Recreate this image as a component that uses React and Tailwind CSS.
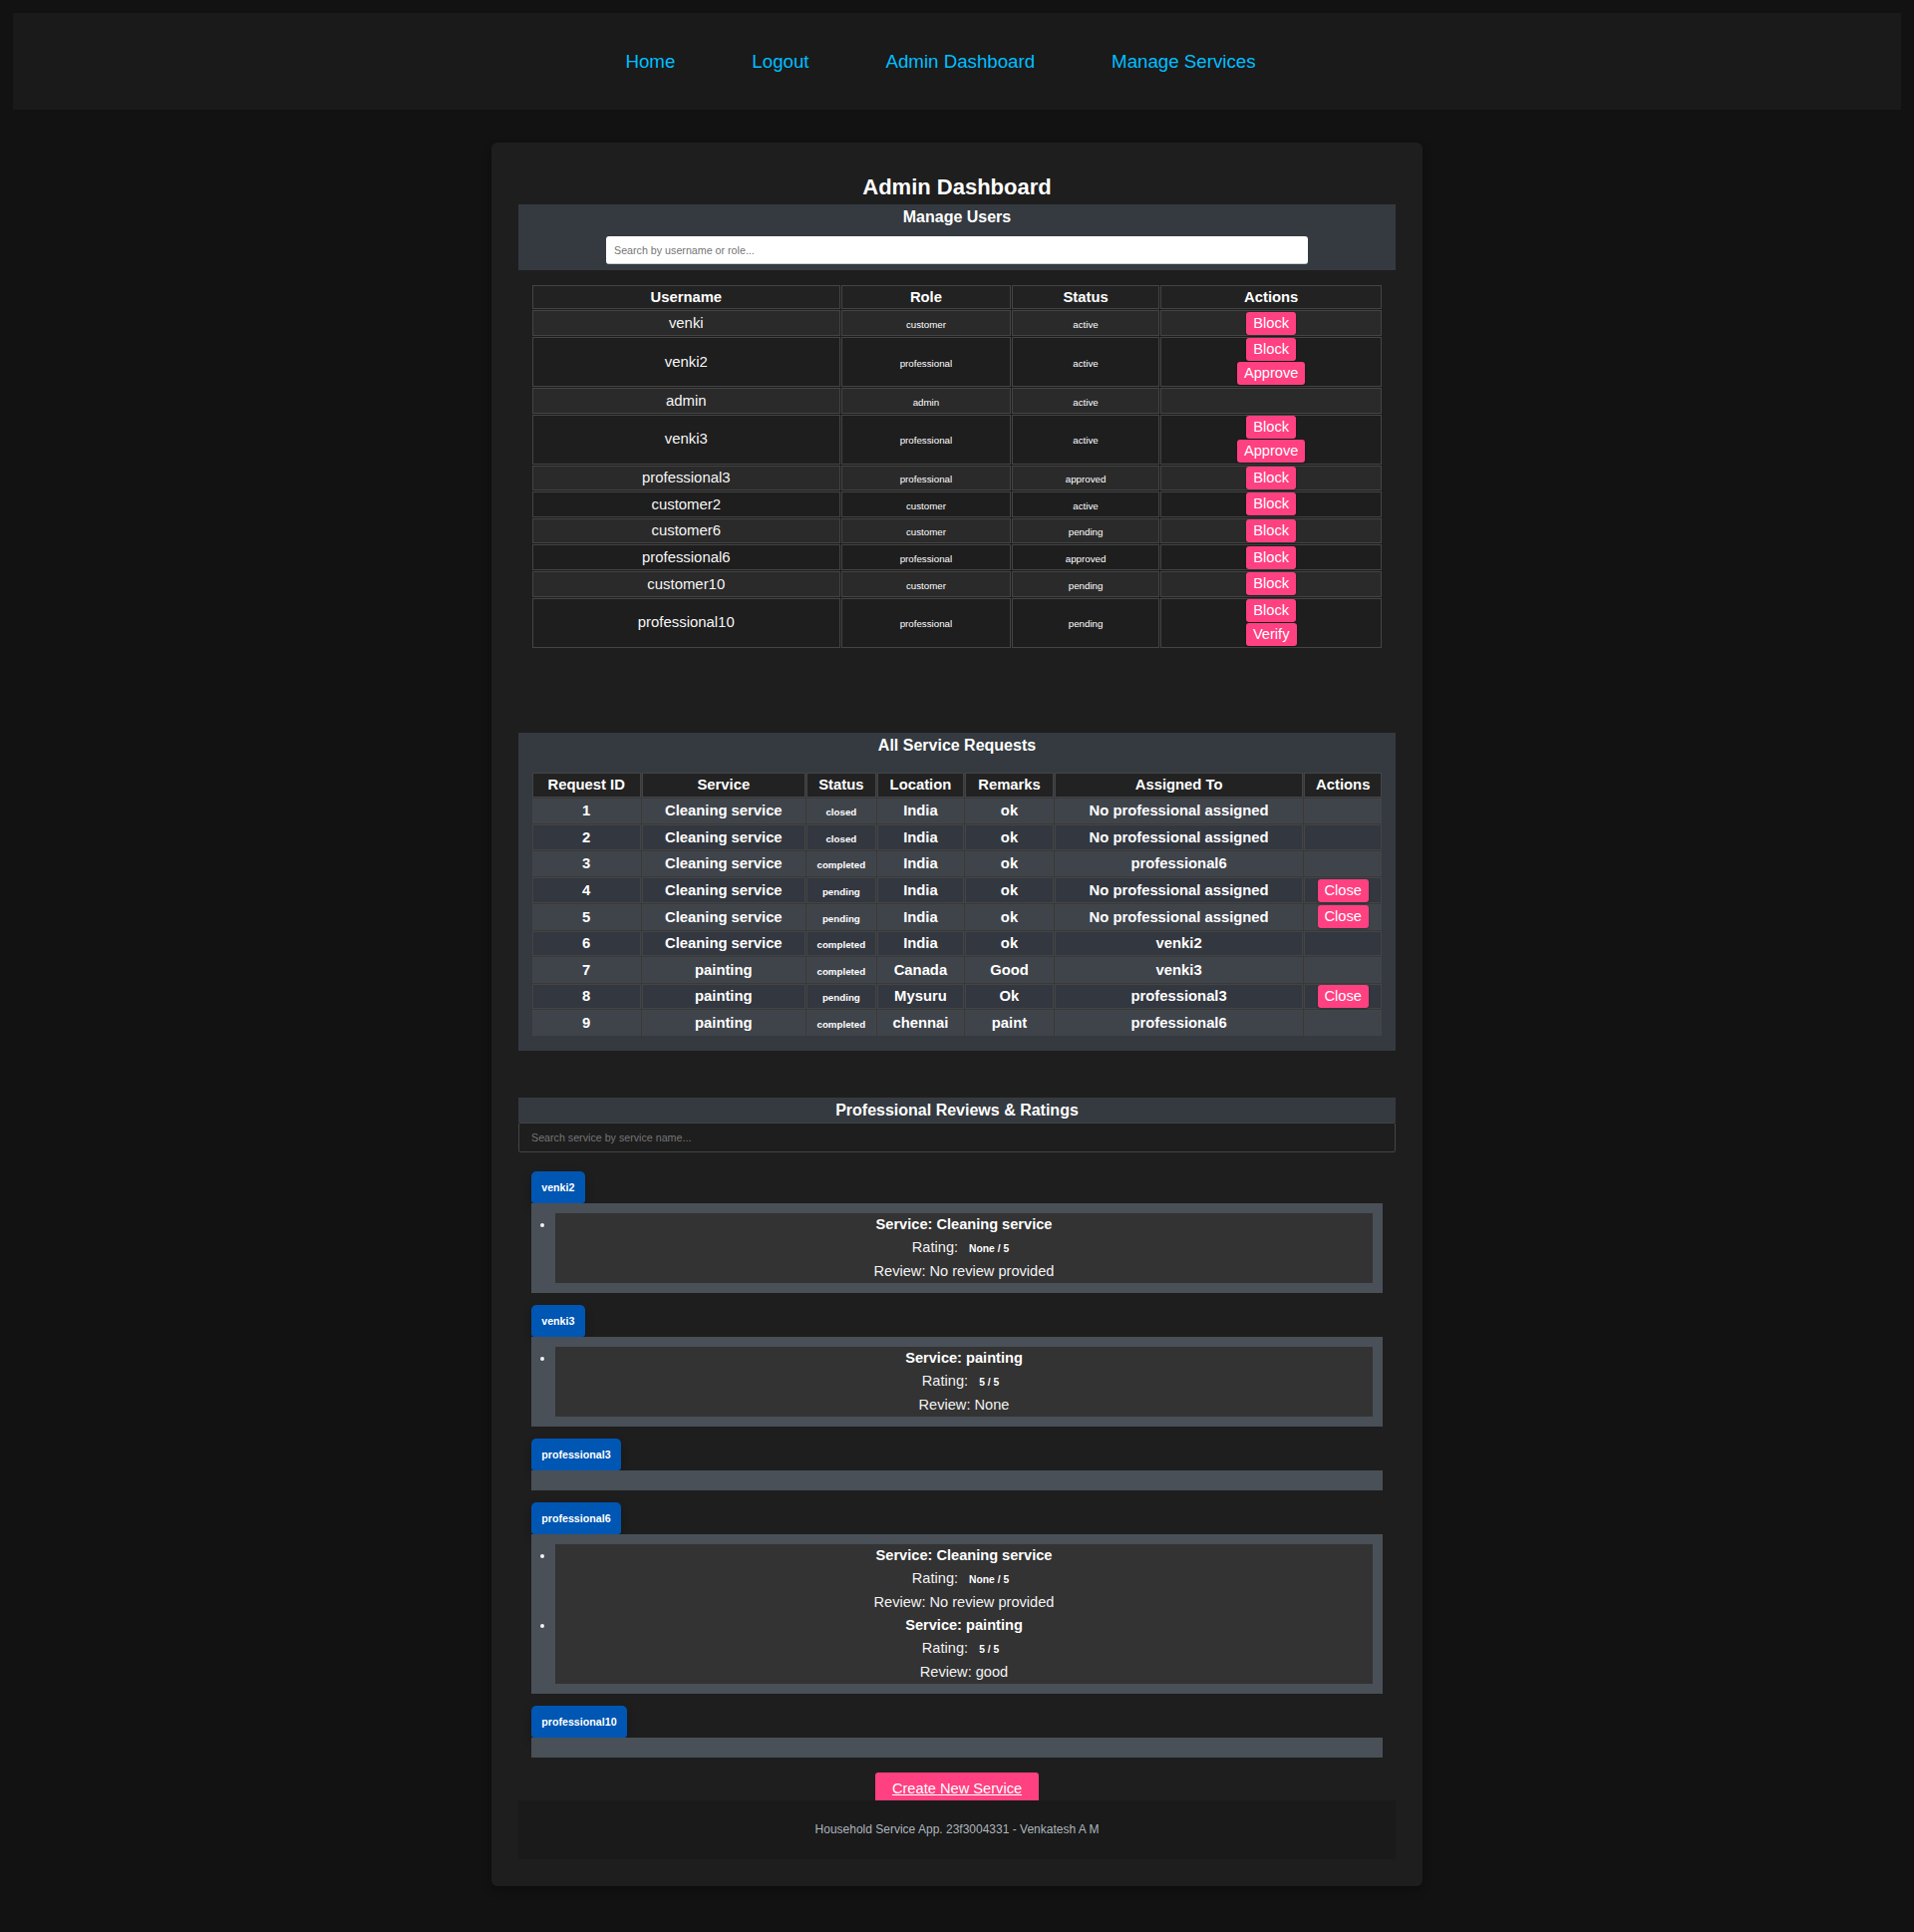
const users = [
  ["venki", "customer", "active", ["Block"]],
  ["venki2", "professional", "active", ["Block", "Approve"]],
  ["admin", "admin", "active", []],
  ["venki3", "professional", "active", ["Block", "Approve"]],
  ["professional3", "professional", "approved", ["Block"]],
  ["customer2", "customer", "active", ["Block"]],
  ["customer6", "customer", "pending", ["Block"]],
  ["professional6", "professional", "approved", ["Block"]],
  ["customer10", "customer", "pending", ["Block"]],
  ["professional10", "professional", "pending", ["Block", "Verify"]],
];

const requests = [
  [1, "Cleaning service", "closed", "India", "ok", "No professional assigned", false],
  [2, "Cleaning service", "closed", "India", "ok", "No professional assigned", false],
  [3, "Cleaning service", "completed", "India", "ok", "professional6", false],
  [4, "Cleaning service", "pending", "India", "ok", "No professional assigned", true],
  [5, "Cleaning service", "pending", "India", "ok", "No professional assigned", true],
  [6, "Cleaning service", "completed", "India", "ok", "venki2", false],
  [7, "painting", "completed", "Canada", "Good", "venki3", false],
  [8, "painting", "pending", "Mysuru", "Ok", "professional3", true],
  [9, "painting", "completed", "chennai", "paint", "professional6", false],
];

const reviews = [
  ["venki2", [["Cleaning service", "None", "No review provided"]]],
  ["venki3", [["painting", "5", "None"]]],
  ["professional3", []],
  ["professional6", [["Cleaning service", "None", "No review provided"], ["painting", "5", "good"]]],
  ["professional10", []],
];

function PinkButton({ children }) {
  return (
    <button className="block mx-auto h-[23px] px-[7px] rounded-[3px] bg-[#ff4081] text-white text-[14.65px] leading-[23px] shadow-[0_1px_2px_rgba(0,0,0,0.3)]">
      {children}
    </button>
  );
}

function Review({ service, rating, review }) {
  return (
    <li className="h-[70px] text-[14.6px] leading-[23px] text-center text-[#f2f2f2] list-disc">
      <p className="font-bold text-white">Service: {service}</p>
      <p>
        Rating: <span className="mx-[7px] text-[10.3px] font-bold text-white">{rating} / 5</span>
      </p>
      <p>Review: {review}</p>
    </li>
  );
}

export default function App() {
  return (
    <div className="min-h-[1938px] bg-[#121212] pt-[13px] font-['Liberation_Sans',Arial,sans-serif] text-white">
      <nav className="mx-[13px] h-[97px] bg-[#1a1a1a] flex items-center justify-center pr-[33px] pt-[2px]">
        <ul className="flex gap-[77px] text-[18.7px] text-[#00bfff]">
          <li>Home</li>
          <li>Logout</li>
          <li>Admin Dashboard</li>
          <li>Manage Services</li>
        </ul>
      </nav>

      <main className="mx-auto mt-[33px] w-[934px] bg-[#1e1e1e] rounded-[6px] px-[27px] pt-[27px] pb-[27px] shadow-[0_4px_8px_rgba(0,0,0,0.3)]">
        <h1 className="h-[35px] leading-[35px] text-center text-[22px] font-bold">Admin Dashboard</h1>

        <section className="h-[66px] bg-[#343a40] pt-[2px]">
          <h2 className="h-[26px] leading-[22px] text-center text-[16px] font-bold">Manage Users</h2>
          <div className="flex justify-center mt-[4px]">
            <input
              className="w-[704px] h-[28px] bg-white rounded-[3px] px-[8px] text-[10.7px] text-black placeholder:text-[#757575] border-b border-[#cccccc] outline-none"
              placeholder="Search by username or role..."
            />
          </div>
        </section>

        <table className="table-fixed border-separate border-spacing-[1.33px] w-[854.65px] ml-[12.67px] mt-[13.67px] text-center text-[14.9px] text-[#f5f5f5]">
          <colgroup>
            <col className="w-[309px]" />
            <col className="w-[170px]" />
            <col className="w-[148px]" />
            <col className="w-[222px]" />
          </colgroup>
          <thead>
            <tr className="h-[24.7px] bg-[#222222] font-bold text-white">
              {["Username", "Role", "Status", "Actions"].map((h) => (
                <th key={h} className="border border-[#444444] p-0 font-bold text-[14.8px]">{h}</th>
              ))}
            </tr>
          </thead>
          <tbody>
            {users.map((u, i) => (
              <tr key={u[0]} className={`${i % 2 === 0 ? "bg-[#2a2a2a]" : "bg-[#1e1e1e]"} ${u[3].length === 2 ? "h-[50px]" : "h-[25.6px]"}`}>
                <td className="border border-[#444444] p-0">{u[0]}</td>
                <td className="border border-[#444444] p-0"><span className="text-[9.75px] text-white">{u[1]}</span></td>
                <td className="border border-[#444444] p-0"><span className="text-[9.75px] text-white">{u[2]}</span></td>
                <td className="border border-[#444444] p-0">
                  <div className="flex flex-col gap-[1px] items-center">
                    {u[3].map((a) => <PinkButton key={a}>{a}</PinkButton>)}
                  </div>
                </td>
              </tr>
            ))}
          </tbody>
        </table>

        <section className="mt-[84.2px] h-[319px] bg-[#343a40] pt-[3px]">
          <h2 className="h-[20px] leading-[20px] text-center text-[16px] font-bold">All Service Requests</h2>
          <table className="table-fixed border-separate border-spacing-[1.33px] w-[854.65px] ml-[12.67px] mt-[16.2px] text-center text-[14.8px] font-bold">
            <colgroup>
              <col className="w-[109px]" />
              <col className="w-[164px]" />
              <col className="w-[70px]" />
              <col className="w-[87px]" />
              <col className="w-[89px]" />
              <col className="w-[249px]" />
              <col className="w-[78px]" />
            </colgroup>
            <thead>
              <tr className="h-[24.7px] bg-[#222222]">
                {["Request ID", "Service", "Status", "Location", "Remarks", "Assigned To", "Actions"].map((h) => (
                  <th key={h} className="border border-[#444444] p-0 font-bold text-[14.8px]">{h}</th>
                ))}
              </tr>
            </thead>
            <tbody>
              {requests.map((r, i) => (
                <tr key={r[0]} className={`h-[25.6px] ${i % 2 === 0 ? "bg-[#3f444b]" : "bg-[#33373f]"}`}>
                  <td className="border border-[#444444] p-0">{r[0]}</td>
                  <td className="border border-[#444444] p-0">{r[1]}</td>
                  <td className="border border-[#444444] p-0"><span className="text-[9.75px]">{r[2]}</span></td>
                  <td className="border border-[#444444] p-0">{r[3]}</td>
                  <td className="border border-[#444444] p-0">{r[4]}</td>
                  <td className="border border-[#444444] p-0">{r[5]}</td>
                  <td className="border border-[#444444] p-0 font-normal">
                    {r[6] && <PinkButton>Close</PinkButton>}
                  </td>
                </tr>
              ))}
            </tbody>
          </table>
        </section>

        <section className="mt-[47px]">
          <h2 className="h-[25px] leading-[25px] bg-[#343a40] text-center text-[16px] font-bold">Professional Reviews &amp; Ratings</h2>
          <input
            className="block w-full h-[30px] bg-[#1e1e1e] border border-[#444444] rounded-[2px] px-[12px] text-[10.7px] placeholder:text-[#757575] outline-none"
            placeholder="Search service by service name..."
          />
          <div className="mx-[13px] mt-[19px] flex flex-col gap-[12px]">
            {reviews.map(([name, items]) => (
              <div key={name}>
                <div className="w-fit h-[32px] leading-[32px] px-[10.2px] rounded-t-[5px] rounded-b-[3px] bg-[#0056b3] text-[10.7px] font-bold text-white shadow-[0_4px_8px_rgba(0,0,0,0.25)]">
                  {name}
                </div>
                <ul className={`bg-[#495057] py-[10px] pl-[24px] pr-[10px] ${items.length ? "" : "h-[20px]"}`}>
                  {items.length > 0 && (
                    <div className="bg-[#333333]">
                      {items.map((it) => (
                        <Review key={it[0]} service={it[0]} rating={it[1]} review={it[2]} />
                      ))}
                    </div>
                  )}
                </ul>
              </div>
            ))}
          </div>
        </section>

        <div className="mt-[15px] flex justify-center">
          <a className="w-[164px] h-[28px] leading-[32px] text-center bg-[#ff4081] rounded-t-[3px] text-[14.65px] text-white underline">Create New Service</a>
        </div>

        <footer className="h-[59px] bg-[#1a1a1a] flex items-center justify-center text-[12px] text-[#adb5bd]">
          Household Service App. 23f3004331 - Venkatesh A M
        </footer>
      </main>
    </div>
  );
}
